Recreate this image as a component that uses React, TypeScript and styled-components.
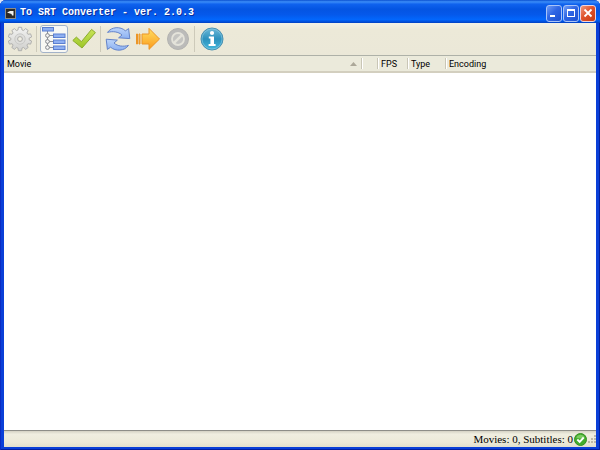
import React from "react";
import styled, { createGlobalStyle } from "styled-components";

const GlobalStyle = createGlobalStyle`
  * { box-sizing: border-box; }
  body { margin: 0; background: #dfe6f5; font-family: "Liberation Sans", sans-serif; }
  button { font: inherit; padding: 0; }
  svg { display: block; }
`;

const Window = styled.main`
  display: flex;
  flex-direction: column;
  min-height: 100vh;
  padding: 0 4px 3px;
  overflow: hidden;
  border-radius: 6px 6px 0 0;
  background: #0a3fd8;
  box-shadow: inset 1px 0 #0a2bc4, inset -1px -1px #0320a0;
`;

const TitleBar = styled.header`
  display: flex;
  align-items: center;
  gap: 4px;
  height: 23px;
  margin: 0 -4px;
  padding: 3px 4px 0 5px;
  background: linear-gradient(
    #0a50d0 0%, #3b8df8 8%, #0f62ee 18%, #0455e2 40%, #0558ea 62%, #0266fc 85%, #0150dc 94%, #0240c0 100%
  );
`;

const Title = styled.h1`
  flex: 1;
  margin: 0;
  color: #fff;
  font: bold 10px/14px "Liberation Mono", monospace;
  white-space: pre;
  text-shadow: 1px 1px #0a2f9a;
`;

const WindowButtons = styled.div`
  display: flex;
  gap: 1px;
`;

const WindowButton = styled.button<{ $danger?: boolean }>`
  display: grid;
  place-items: center;
  width: 16px;
  height: 17px;
  border: 1px solid ${(p) => (p.$danger ? "#f0d5dc" : "#a9c4f8")};
  border-radius: 3px;
  background: ${(p) =>
    p.$danger
      ? "linear-gradient(135deg, #ee9a80, #e0532c 45%, #c83c14)"
      : "linear-gradient(135deg, #6f9cf6, #2f66e4 45%, #1c50d0)"};
`;

const Toolbar = styled.div`
  display: flex;
  align-items: center;
  gap: 2px;
  height: 32px;
  padding-left: 2px;
  background: linear-gradient(#f3f1e6, #ece9d8 20%, #ebe8d8);
`;

const ToolButton = styled.button`
  display: grid;
  place-items: center;
  width: 28px;
  height: 28px;
  border: 1px solid transparent;
  border-radius: 3px;
  background: none;

  &[aria-pressed="true"] {
    border-color: #a3b3c9;
    background: #f8f8f4;
  }
`;

const Separator = styled.div`
  width: 1px;
  height: 26px;
  margin-right: 1px;
  background: #cdcaba;
`;

const List = styled.section`
  flex: 1;
  background: #fff;
  border-bottom: 1px solid #8e8e88;
`;

const Table = styled.table`
  width: 100%;
  table-layout: fixed;
  border-collapse: separate;
  border-spacing: 0;
  border-top: 1px solid #aeb1a8;
`;

const HeaderCell = styled.th<{ $width?: number; $first?: boolean }>`
  width: ${(p) => (p.$width ? `${p.$width}px` : "auto")};
  height: 17px;
  padding: 0 4px 0 ${(p) => (p.$first ? 3 : 4)}px;
  border-bottom: 2px solid #d3cfbf;
  background: linear-gradient(to right, #c9c6b6 1px, #fff 1px, #fff 2px, transparent 2px) no-repeat
      ${(p) => (p.$first ? "-4px" : "0")} 2px / 2px 11px,
    #ebeadb;
  color: #000;
  text-align: left;
  white-space: nowrap;
  font: 9px/14px Roboto, sans-serif;
`;

const HeaderContent = styled.div`
  display: flex;
  align-items: center;
  justify-content: space-between;
`;

const StatusBar = styled.footer`
  display: flex;
  align-items: center;
  justify-content: flex-end;
  gap: 1px;
  height: 16px;
  background: linear-gradient(#d5d2c4, #f0eee0 20%, #ece9d8 70%, #e2dfcd);
  color: #000;
  font: 11px/14px "Liberation Serif", serif;
`;

const TEETH = 10;

const gearPoints = Array.from({ length: TEETH }, (_, tooth) =>
  [
    [-0.28, 9.2],
    [-0.17, 11.8],
    [0.17, 11.8],
    [0.28, 9.2],
  ].map(([offset, radius]) => {
    const angle = (tooth * 2 * Math.PI) / TEETH + offset * 0.8;
    return `${(13 + radius * Math.sin(angle)).toFixed(2)},${(13 - radius * Math.cos(angle)).toFixed(2)}`;
  }),
)
  .flat()
  .join(" ");

const GearIcon = () => (
  <svg width="26" height="26" viewBox="0 0 26 26">
    <defs>
      <linearGradient id="gear" x1="0" y1="0" x2="0" y2="1">
        <stop offset="0" stopColor="#f2f2f1" />
        <stop offset="1" stopColor="#cfcfcd" />
      </linearGradient>
    </defs>
    <polygon points={gearPoints} fill="url(#gear)" stroke="#b0b0ae" strokeLinejoin="round" />
    <circle cx="13" cy="13" r="5.2" fill="#dededc" stroke="#c9c9c7" />
    <circle cx="13" cy="13" r="2.4" fill="#f1efe4" stroke="#adadab" />
  </svg>
);

const TreeIcon = () => (
  <svg width="26" height="26" viewBox="0 0 26 26">
    <path d="M6.5 5v17M6.5 9.5h6M6.5 15.5h6M6.5 21.5h6" fill="none" stroke="#8a8f98" />
    <g fill="#8fb0f2" stroke="#5b7fd0">
      <rect x="1.5" y="1.5" width="11" height="3.5" />
      <rect x="12.5" y="8" width="11.5" height="3.5" />
      <rect x="12.5" y="14" width="11.5" height="3.5" />
      <rect x="12.5" y="20" width="11.5" height="3.5" />
    </g>
    <g fill="#f4f4f4" stroke="#85888e">
      <circle cx="6.5" cy="9.5" r="1.9" />
      <circle cx="6.5" cy="15.5" r="1.9" />
      <circle cx="6.5" cy="21.5" r="1.9" />
    </g>
  </svg>
);

const CheckIcon = () => (
  <svg width="26" height="26" viewBox="0 0 26 26">
    <defs>
      <linearGradient id="check" x1="0" y1="0" x2="0" y2="1">
        <stop offset="0" stopColor="#c9e456" />
        <stop offset="1" stopColor="#9cc628" />
      </linearGradient>
    </defs>
    <path d="M1.8 14.5l3.6-3.4 5 4.6L20.6 3.4l3.8 3.2L11 22z" fill="url(#check)" stroke="#8aab2c" strokeLinejoin="round" />
  </svg>
);

const RefreshIcon = () => (
  <svg width="26" height="26" viewBox="0 0 26 26">
    <defs>
      <linearGradient id="refresh" x1="0" y1="0" x2="0" y2="1">
        <stop offset="0" stopColor="#bdd5fa" />
        <stop offset="1" stopColor="#8cb1f2" />
      </linearGradient>
    </defs>
    <g fill="url(#refresh)" stroke="#6483c8" strokeLinejoin="round">
      <path d="M2.5 6.4C6.5 .6 15.5 .2 20.4 4.8L23.6 2.6l1.2 10-11.2-.8 3.4-2.8C13.4 5.6 7.5 5 2.5 6.4z" />
      <path d="M23.5 19.4C19.5 25.2 10.5 25.6 5.6 21.2L2.4 23.4l-1.2-10.2 11.2.9-3.4 2.9C12.600 20.400 18.500 20.800 23.500 19.400z" />
    </g>
  </svg>
);

const ArrowIcon = () => (
  <svg width="26" height="26" viewBox="0 0 26 26">
    <defs>
      <linearGradient id="arrow" x1="0" y1="0" x2="0" y2="1">
        <stop offset="0" stopColor="#ffdf62" />
        <stop offset="1" stopColor="#fb9a1c" />
      </linearGradient>
    </defs>
    <g fill="url(#arrow)" stroke="#ec9628" strokeLinejoin="round">
      <path d="M7 8h7V2.4L24.5 13 14 23.4V18H7z" />
      <path d="M1.500 8h1v10h-1zM4 8h1v10H4z" />
    </g>
  </svg>
);

const ForbiddenIcon = () => (
  <svg width="26" height="26" viewBox="0 0 26 26">
    <circle cx="13" cy="13" r="10.5" fill="#bbbbb9" stroke="#b3b3b0" />
    <circle cx="13" cy="13" r="6" fill="#c4c4c1" stroke="#e4e3da" strokeWidth="1.8" />
    <path d="M8.8 17.2l8.4-8.4" stroke="#e4e3da" strokeWidth="2.4" />
  </svg>
);

const InfoIcon = () => (
  <svg width="26" height="26" viewBox="0 0 26 26">
    <defs>
      <linearGradient id="info" x1="0" y1="0" x2="0" y2="1">
        <stop offset="0" stopColor="#6db9d8" />
        <stop offset=".5" stopColor="#2c91bd" />
        <stop offset="1" stopColor="#45b8dc" />
      </linearGradient>
    </defs>
    <circle cx="13" cy="13" r="11" fill="url(#info)" stroke="#4a90b0" />
    <circle cx="13" cy="13" r="10" fill="none" stroke="#8dcbe2" strokeWidth=".6" />
    <circle cx="13" cy="7" r="2.1" fill="#fff" />
    <path d="M9.800 10.400h5.200v7.600h1.600v2H9.600v-2h1.800v-5.600H9.800z" fill="#fff" />
  </svg>
);

const AppIcon = () => (
  <svg width="11" height="11" viewBox="0 0 11 11">
    <rect x=".5" y=".5" width="10" height="10" fill="#2c2a28" stroke="#8b8b88" />
    <path d="M2 4.5L5 3h3.500v4.500H7L6.500 6z" fill="#f4f4f0" />
  </svg>
);

const OkIcon = () => (
  <svg width="13" height="13" viewBox="0 0 13 13">
    <circle cx="6.5" cy="6.5" r="6" fill="#43ad2c" stroke="#349023" />
    <path d="M2 4.500a5 5 0 0 1 9 0Q6.500 6.500 2 4.500z" fill="#7bcb62" />
    <path d="M3.300 6.500l2.400 2.400 4-4.400" fill="none" stroke="#fff" strokeWidth="1.9" />
  </svg>
);

const GripIcon = () => (
  <svg width="8" height="10" viewBox="0 0 8 10">
    <path d="M6 1h2v2H6zM3 4h2v2H3zM6 4h2v2H6zM0 7h2v2H0zM3 7h2v2H3zM6 7h2v2H6z" fill="#bdb9a7" />
  </svg>
);

const SortIcon = () => (
  <svg width="7" height="4" viewBox="0 0 7 4">
    <path d="M0 4L3.5 0 7 4z" fill="#aca899" />
  </svg>
);

type Tool = { label: string; icon: React.ReactNode; pressed?: boolean };

const toolGroups: Tool[][] = [
  [{ label: "Settings", icon: <GearIcon /> }],
  [
    { label: "Tree view", icon: <TreeIcon />, pressed: true },
    { label: "Select", icon: <CheckIcon /> },
  ],
  [
    { label: "Refresh", icon: <RefreshIcon /> },
    { label: "Convert", icon: <ArrowIcon /> },
    { label: "Stop", icon: <ForbiddenIcon /> },
  ],
  [{ label: "About", icon: <InfoIcon /> }],
];

export default function App() {
  return (
    <>
      <GlobalStyle />
      <Window>
        <TitleBar>
          <AppIcon />
          <Title>To SRT Converter - ver. 2.0.3</Title>
          <WindowButtons>
            <WindowButton aria-label="Minimize">
              <svg width="12" height="12" viewBox="0 0 12 12">
                <path d="M2 8h5v2H2z" fill="#fff" />
              </svg>
            </WindowButton>
            <WindowButton aria-label="Maximize">
              <svg width="12" height="12" viewBox="0 0 12 12">
                <path d="M2 2h8v8H2zM3 4v5h6V4z" fill="#fff" fillRule="evenodd" />
              </svg>
            </WindowButton>
            <WindowButton $danger aria-label="Close">
              <svg width="12" height="12" viewBox="0 0 12 12">
                <path d="M2.500 2.500l7 7M9.500 2.500l-7 7" stroke="#fff" strokeWidth="1.8" />
              </svg>
            </WindowButton>
          </WindowButtons>
        </TitleBar>
        <Toolbar role="toolbar">
          {toolGroups.map((group, index) => (
            <React.Fragment key={index}>
              {index > 0 && <Separator />}
              {group.map((tool) => (
                <ToolButton key={tool.label} aria-label={tool.label} aria-pressed={tool.pressed}>
                  {tool.icon}
                </ToolButton>
              ))}
            </React.Fragment>
          ))}
        </Toolbar>
        <List>
          <Table>
            <thead>
              <tr>
                <HeaderCell $first aria-sort="ascending">
                  <HeaderContent>
                    Movie
                    <SortIcon />
                  </HeaderContent>
                </HeaderCell>
                <HeaderCell $width={16} />
                <HeaderCell $width={30}>FPS</HeaderCell>
                <HeaderCell $width={38}>Type</HeaderCell>
                <HeaderCell $width={151}>Encoding</HeaderCell>
              </tr>
            </thead>
          </Table>
        </List>
        <StatusBar>
          Movies: 0, Subtitles: 0
          <OkIcon />
          <GripIcon />
        </StatusBar>
      </Window>
    </>
  );
}
